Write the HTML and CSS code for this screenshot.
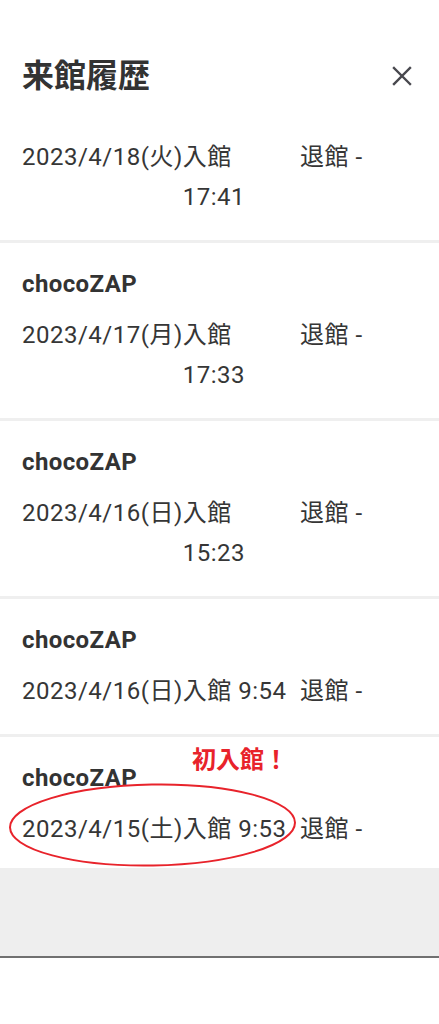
FILE: index.html
```html
<!DOCTYPE html>
<html lang="ja">
<head>
  <meta charset="UTF-8">
  <meta name="viewport" content="width=device-width, initial-scale=1.0">
  <title>来館履歴</title>
  <link rel="stylesheet" href="styles.css">
</head>
<body>

<div class="header">
  <h1>来館履歴</h1>
  <button type="button" class="close" aria-label="閉じる">
    <svg width="20" height="20" viewBox="0 0 20 20"><path d="M2 2L18 18M18 2L2 18" stroke="#48484e" stroke-width="2.4" stroke-linecap="square"/></svg>
  </button>
</div>

<ul class="history">
  <li class="visit first">
    <div class="times">
      <div class="in"><span class="date">2023/4/18(火)</span><span class="in-time">入館 17:41</span></div>
      <div class="out">退館 -</div>
    </div>
  </li>
  <li class="visit">
    <div class="shop">chocoZAP</div>
    <div class="times">
      <div class="in"><span class="date">2023/4/17(月)</span><span class="in-time">入館 17:33</span></div>
      <div class="out">退館 -</div>
    </div>
  </li>
  <li class="visit">
    <div class="shop">chocoZAP</div>
    <div class="times">
      <div class="in"><span class="date">2023/4/16(日)</span><span class="in-time">入館 15:23</span></div>
      <div class="out">退館 -</div>
    </div>
  </li>
  <li class="visit">
    <div class="shop">chocoZAP</div>
    <div class="times">
      <div class="in"><span class="date">2023/4/16(日)</span><span class="in-time">入館 9:54</span></div>
      <div class="out">退館 -</div>
    </div>
  </li>
  <li class="visit last">
    <div class="shop">chocoZAP</div>
    <div class="times">
      <div class="in"><span class="date">2023/4/15(土)</span><span class="in-time">入館 9:53</span></div>
      <div class="out">退館 -</div>
    </div>
    <!-- hand-drawn note -->
    <span class="note">初入館！</span>
    <svg class="circle" width="292" height="90" viewBox="0 0 292 90">
      <ellipse cx="144.5" cy="45" rx="142.5" ry="40.5" fill="none" stroke="#e8232b" stroke-width="2" transform="rotate(-1 144.5 45)"/>
    </svg>
  </li>
</ul>

<div class="footer"></div>

</body>
</html>
```

FILE: styles.css
```css
body {
  margin: 0;
  background: #fff;
  color: #363636;
  font-family: Roboto, "Noto Sans CJK JP", sans-serif;
}
.header {
  display: flex;
  justify-content: space-between;
  align-items: center;
  padding: 56px 27px 0 22px;
}
.header h1 {
  margin: 0;
  font-size: 32px;
  line-height: 40px;
  font-weight: bold;
  color: #333;
}
.close {
  border: none;
  background: none;
  padding: 0;
  width: 20px;
  height: 20px;
}
.history {
  list-style: none;
  margin: 0;
  padding: 0;
}
.visit {
  position: relative;
  padding: 27px 0 23px 22px;
  border-top: 3px solid #efefef;
}
.visit.first {
  padding-top: 41px;
  border-top: none;
}
.visit.last {
  padding-bottom: 19px;
}
.shop {
  font-size: 24px;
  line-height: 28px;
  font-weight: bold;
  letter-spacing: 0.4px;
  color: #333;
  margin-bottom: 17px;
}
.times {
  display: flex;
  gap: 8px;
  font-size: 24px;
  line-height: 40px;
  letter-spacing: 0.5px;
}
.in {
  display: flex;
  width: 270px;
}
.date {
  flex-shrink: 0;
}
.out {
  white-space: nowrap;
}
.note {
  position: absolute;
  left: 192px;
  top: 9px;
  color: #e8232b;
  font-size: 24px;
  line-height: 28px;
  font-weight: bold;
}
.circle {
  position: absolute;
  left: 8px;
  top: 43px;
}
.footer {
  height: 88px;
  background: #eeeeee;
  border-bottom: 2px solid #707070;
}
```
